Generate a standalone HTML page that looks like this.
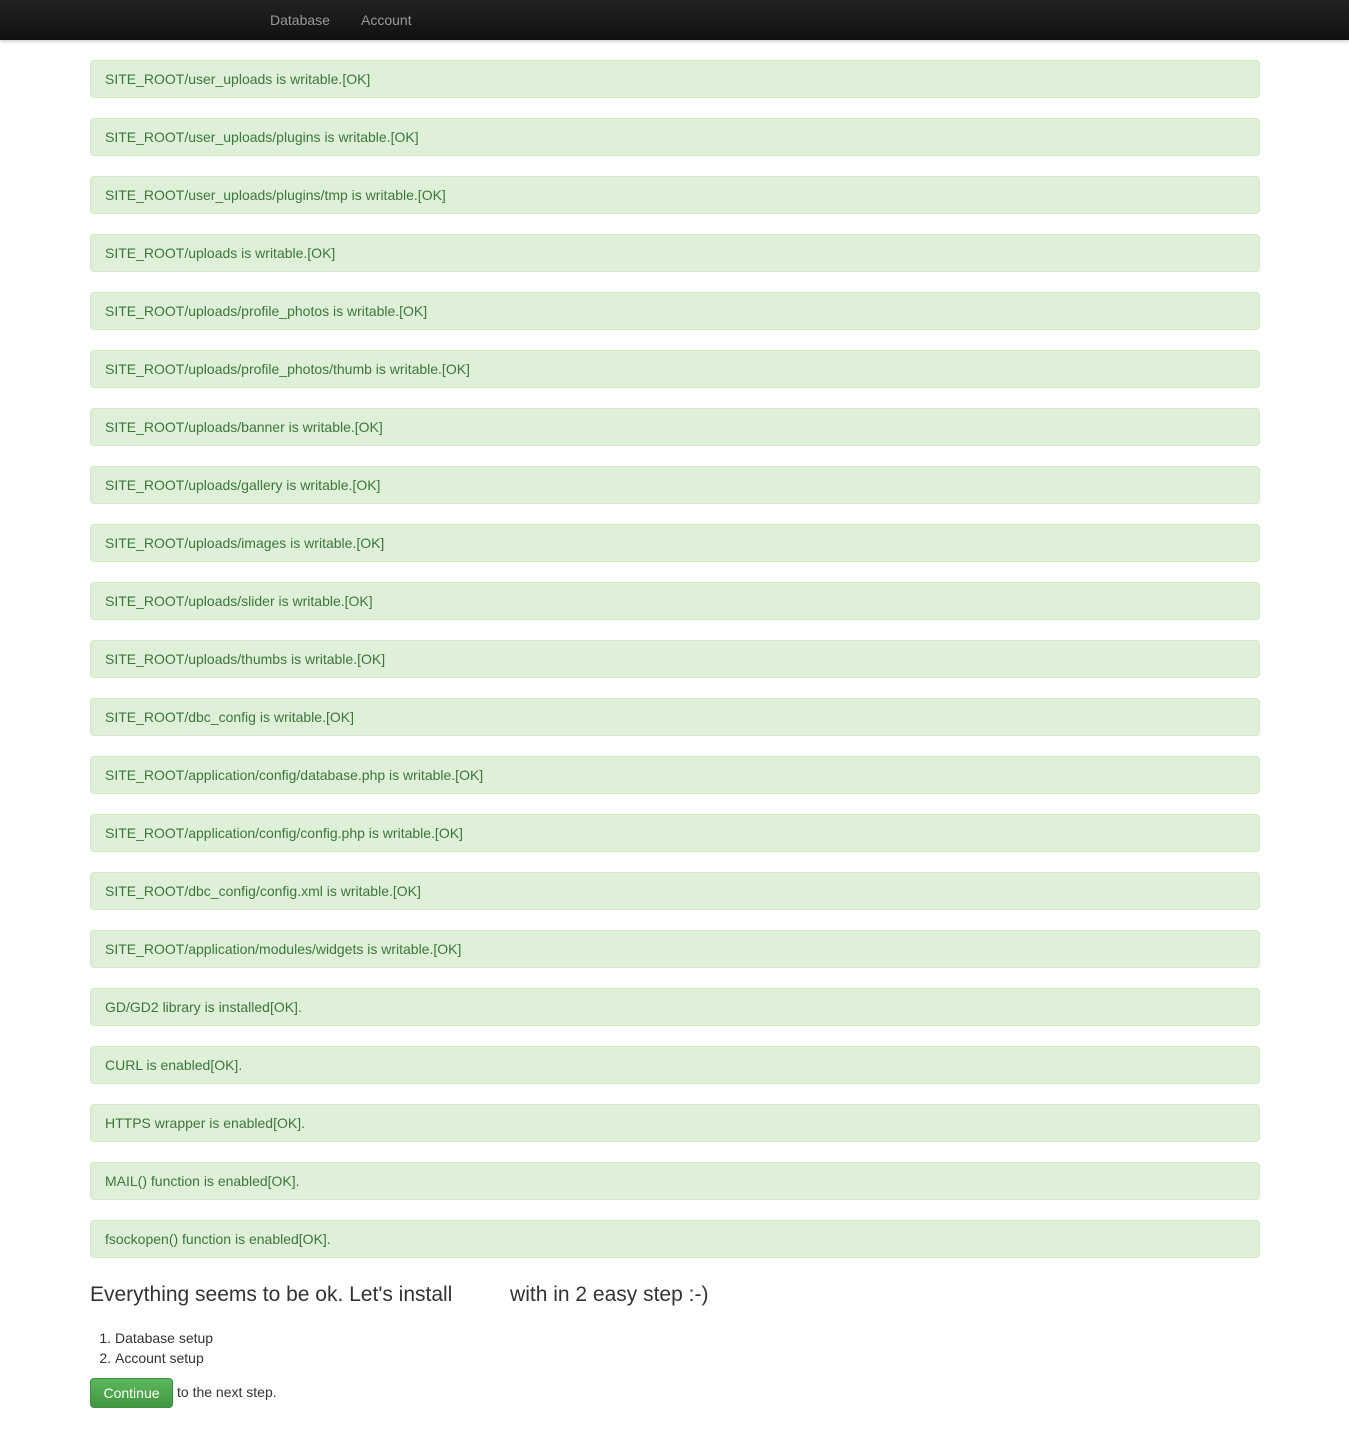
<!DOCTYPE html>
<html><head><style>
body{margin:0;font-family:"Liberation Sans",Arial,sans-serif;font-size:14px;color:#333;background:#fff;}
.nav{height:40px;background:linear-gradient(#222,#111);box-shadow:0 1px 4px rgba(0,0,0,.25);position:relative}
.nav a{position:absolute;top:12px;color:#999;font-size:14px;text-decoration:none}
.wrap{position:absolute;left:90px;width:1170px;top:60px}
.al{box-sizing:border-box;height:38px;margin-bottom:20px;background:#dff0d8;border:1px solid #d6e9c6;border-radius:4px;color:#3c763d;padding:10px 14px;line-height:16px}
h3{font-size:21px;font-weight:normal;margin:0;position:absolute;top:1283px;left:90px;color:#333}
ol{position:absolute;top:1328px;left:90px;margin:0;padding-left:25px;line-height:20px}
.btn{position:absolute;top:1378px;left:90px;width:83px;height:30px;box-sizing:border-box;background:linear-gradient(#5cb85c,#419641);border:1px solid #3e8f3e;border-radius:4px;color:#fff;text-align:center;line-height:28px;font-size:14px}
.nx{position:absolute;top:1384px;left:177px}
</style></head><body>
<div class="nav"><a style="left:270px">Database</a><a style="left:361px">Account</a></div>
<div class="wrap">
<div class="al">SITE_ROOT/user_uploads is writable.[OK]</div>
<div class="al">SITE_ROOT/user_uploads/plugins is writable.[OK]</div>
<div class="al">SITE_ROOT/user_uploads/plugins/tmp is writable.[OK]</div>
<div class="al">SITE_ROOT/uploads is writable.[OK]</div>
<div class="al">SITE_ROOT/uploads/profile_photos is writable.[OK]</div>
<div class="al">SITE_ROOT/uploads/profile_photos/thumb is writable.[OK]</div>
<div class="al">SITE_ROOT/uploads/banner is writable.[OK]</div>
<div class="al">SITE_ROOT/uploads/gallery is writable.[OK]</div>
<div class="al">SITE_ROOT/uploads/images is writable.[OK]</div>
<div class="al">SITE_ROOT/uploads/slider is writable.[OK]</div>
<div class="al">SITE_ROOT/uploads/thumbs is writable.[OK]</div>
<div class="al">SITE_ROOT/dbc_config is writable.[OK]</div>
<div class="al">SITE_ROOT/application/config/database.php is writable.[OK]</div>
<div class="al">SITE_ROOT/application/config/config.php is writable.[OK]</div>
<div class="al">SITE_ROOT/dbc_config/config.xml is writable.[OK]</div>
<div class="al">SITE_ROOT/application/modules/widgets is writable.[OK]</div>
<div class="al">GD/GD2 library is installed[OK].</div>
<div class="al">CURL is enabled[OK].</div>
<div class="al">HTTPS wrapper is enabled[OK].</div>
<div class="al">MAIL() function is enabled[OK].</div>
<div class="al">fsockopen() function is enabled[OK].</div>
</div>
<h3>Everything seems to be ok. Let's install <span style="display:inline-block;width:46px"></span> with in 2 easy step :-)</h3>
<ol><li>Database setup</li><li>Account setup</li></ol>
<div class="btn">Continue</div><span class="nx">to the next step.</span>
</body></html>
